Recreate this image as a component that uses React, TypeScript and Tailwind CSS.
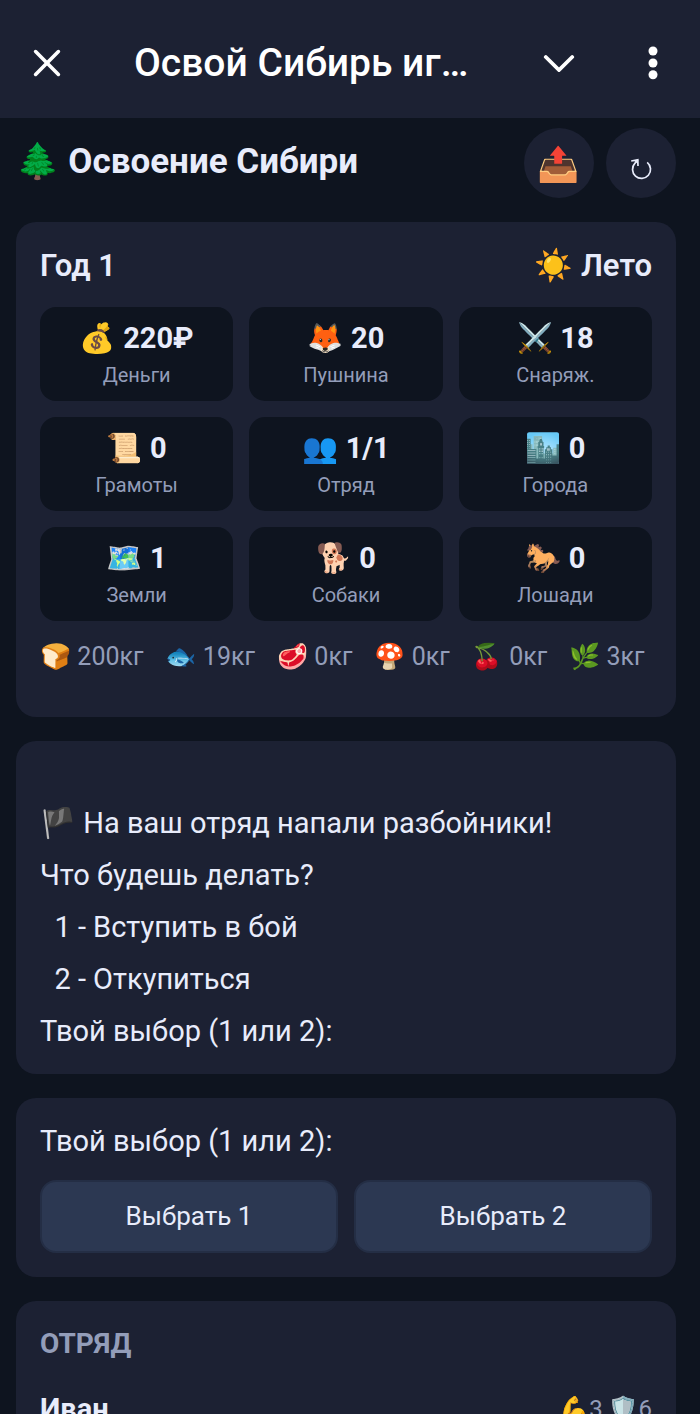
import React from 'react';

const stats = [
  { icon: '💰', value: '220₽', label: 'Деньги' },
  { icon: '🦊', value: '20', label: 'Пушнина' },
  { icon: '⚔️', value: '18', label: 'Снаряж.' },
  { icon: '📜', value: '0', label: 'Грамоты' },
  { icon: '👥', value: '1/1', label: 'Отряд' },
  { icon: '🏙️', value: '0', label: 'Города' },
  { icon: '🗺️', value: '1', label: 'Земли' },
  { icon: '🐕', value: '0', label: 'Собаки' },
  { icon: '🐎', value: '0', label: 'Лошади' },
];

const food = [
  { icon: '🍞', amount: '200кг' },
  { icon: '🐟', amount: '19кг' },
  { icon: '🥩', amount: '0кг' },
  { icon: '🍄', amount: '0кг' },
  { icon: '🍒', amount: '0кг' },
  { icon: '🌿', amount: '3кг' },
];

const TopBar = () => (
  <header className="flex h-[118px] shrink-0 items-center bg-[#1c2133] px-[27px] pt-2 text-white">
    <button type="button" aria-label="Закрыть" className="flex size-10 items-center justify-center">
      <svg viewBox="0 0 28 28" className="size-7" fill="none" stroke="currentColor" strokeWidth="3.6" strokeLinecap="round">
        <path d="M2.6 2.6l22.8 22.8M25.4 2.6L2.6 25.4" />
      </svg>
    </button>
    <div className="ml-[67px] flex-1 text-[39px] font-medium whitespace-nowrap">Освой Сибирь иг…</div>
    <button type="button" aria-label="Свернуть" className="flex size-10 items-center justify-center">
      <svg viewBox="0 0 32 18" className="h-[18px] w-8" fill="none" stroke="currentColor" strokeWidth="3.8" strokeLinecap="round">
        <path d="M2.8 3L16 16L29.2 3" />
      </svg>
    </button>
    <button type="button" aria-label="Меню" className="ml-[54px] flex size-10 items-center justify-center">
      <svg viewBox="0 0 10 34" className="h-[34px] w-[10px]" fill="currentColor">
        <circle cx="5" cy="5" r="4.5" />
        <circle cx="5" cy="17" r="4.5" />
        <circle cx="5" cy="28.8" r="4.5" />
      </svg>
    </button>
  </header>
);

const Card = ({ children, className = '' }: { children: React.ReactNode; className?: string }) => (
  <section className={`rounded-[20px] bg-[#1c2133] px-6 ${className}`}>{children}</section>
);

const App = () => {
  return (
    <div className="flex h-screen flex-col overflow-hidden bg-[#0e141f] font-[Roboto,'Noto_Color_Emoji',sans-serif] text-[#e8ecfb]">
      <TopBar />
      <main className="flex flex-1 flex-col gap-6 overflow-y-auto pr-6 pl-4 [scrollbar-width:none]">
        <div className="mt-[9px] flex h-[71px] shrink-0 items-center gap-3">
          <h1 className="flex-1 text-[35px] font-bold whitespace-nowrap">🌲 Освоение Сибири</h1>
          <button type="button" aria-label="Поделиться" className="flex size-[70px] items-center justify-center rounded-full bg-[#1c2133] pt-1 text-[34px]">
            📤
          </button>
          <button type="button" aria-label="Обновить" className="flex size-[70px] items-center justify-center rounded-full bg-[#1c2133] pt-3">
            <svg viewBox="0 0 22 22" className="size-[22px]" fill="none" stroke="currentColor" strokeWidth="1.7">
              <path d="M17.2 4.4A9 9 0 1 1 5 5.2L7.8 1.8" />
              <path d="M1.2 3L7.8 1.8L8 8" />
              <path d="M4 2.8L8 1.6L8 6z" fill="currentColor" stroke="none" />
            </svg>
          </button>
        </div>

        {/* Year and resources */}
        <Card className="shrink-0 pt-6 pb-10">
          <div className="flex items-center justify-between text-[31px] leading-[40px] font-semibold">
            <h2>Год 1</h2>
            <span>☀️ Лето</span>
          </div>
          <div className="mt-[21px] grid grid-cols-3 gap-4">
            {stats.map((stat) => (
              <div key={stat.label} className="rounded-2xl bg-[#0e141f] pt-3 pb-3 text-center">
                <div className="text-[29px] leading-[38px] font-bold">
                  {stat.icon} {stat.value}
                </div>
                <div className="mt-1 text-[20px] leading-[28px] text-[#939db9]">{stat.label}</div>
              </div>
            ))}
          </div>
          <div className="mt-4 flex gap-[22px] text-[25px] leading-[40px] whitespace-nowrap text-[#939db9]">
            {food.map((item) => (
              <span key={item.icon}>
                {item.icon} {item.amount}
              </span>
            ))}
          </div>
        </Card>

        {/* Event log */}
        <Card className="shrink-0 pt-14 pb-[17px]">
          <div className="text-[29px] leading-[52px] whitespace-pre-wrap">
            {'🏴 На ваш отряд напали разбойники!\nЧто будешь делать?\n  1 - Вступить в бой\n  2 - Откупиться\nТвой выбор (1 или 2):'}
          </div>
        </Card>

        <Card className="shrink-0 pt-6 pb-6">
          <p className="text-[29px] leading-[38px]">Твой выбор (1 или 2):</p>
          <div className="mt-5 grid grid-cols-2 gap-4">
            <button type="button" className="h-[73px] rounded-2xl border-2 border-[#242e45] bg-[#2c3852] text-[26px]">
              Выбрать 1
            </button>
            <button type="button" className="h-[73px] rounded-2xl border-2 border-[#242e45] bg-[#2c3852] text-[26px]">
              Выбрать 2
            </button>
          </div>
        </Card>

        {/* Squad */}
        <Card className="shrink-0 pt-6 pb-6">
          <h2 className="text-[28px] leading-[38px] font-bold text-[#939db9]">ОТРЯД</h2>
          <div className="mt-6 flex items-center justify-between leading-[44px]">
            <span className="text-[29px] font-bold">Иван</span>
            <span className="text-[24px] text-[#939db9]">💪3 🛡️6</span>
          </div>
        </Card>
      </main>
    </div>
  );
};

export default App;
